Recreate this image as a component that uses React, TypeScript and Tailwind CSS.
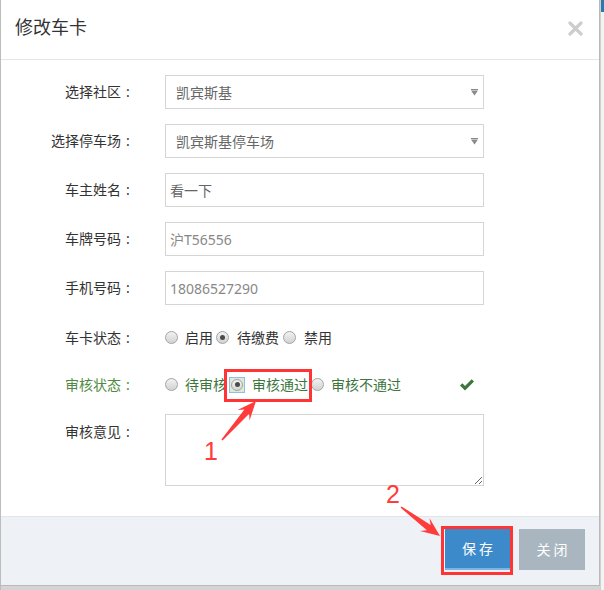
import React from "react";

const CJK = { fontFamily: '"Noto Sans", "Noto Sans CJK SC", sans-serif' };

function arrowPoints(tx: number, ty: number, px: number, py: number) {
  const dx = px - tx;
  const dy = py - ty;
  const len = Math.sqrt(dx * dx + dy * dy);
  const ux = dx / len;
  const uy = dy / len;
  const nx = -uy;
  const ny = ux;
  const headLen = 19;
  const bx = px - ux * headLen;
  const by = py - uy * headLen;
  const nbx = px - ux * (headLen - 5);
  const nby = py - uy * (headLen - 5);
  const pts: [number, number][] = [
    [tx + nx * 0.8, ty + ny * 0.8],
    [nbx + nx * 3.2, nby + ny * 3.2],
    [bx + nx * 8, by + ny * 8],
    [px, py],
    [bx - nx * 8, by - ny * 8],
    [nbx - nx * 3.2, nby - ny * 3.2],
    [tx - nx * 0.8, ty - ny * 0.8],
  ];
  return pts.map((p) => `${p[0].toFixed(1)},${p[1].toFixed(1)}`).join(" ");
}

function Radio({ checked }: { checked?: boolean }) {
  return (
    <span className="w-[13px] h-[13px] rounded-full border border-[#a3a3a3] bg-gradient-to-b from-[#f2f2f2] to-[#d2d2d2] flex items-center justify-center shrink-0">
      {checked && <span className="w-[5px] h-[5px] rounded-full bg-[#4a4a4a]" />}
    </span>
  );
}

function Caret() {
  return (
    <svg width="7" height="7" viewBox="0 0 7 7" className="shrink-0">
      <rect x="0" y="0" width="7" height="1" fill="#8a8a8a" />
      <polygon points="0,1.5 7,1.5 3.5,6.5" fill="#8a8a8a" />
    </svg>
  );
}

function Row({
  label,
  children,
  mb = "mb-[15px]",
  labelClass = "text-[#333]",
  top = false,
}: {
  label: string;
  children: React.ReactNode;
  mb?: string;
  labelClass?: string;
  top?: boolean;
}) {
  return (
    <div className={`flex ${top ? "items-start" : "items-center"} ${mb}`}>
      <div className={`w-[134px] flex justify-end text-[14px] leading-[20px] ${labelClass} ${top ? "pt-[8px]" : ""}`}>
        <span>{label}</span>
        <span className="w-[14px] text-center">:</span>
      </div>
      <div className="ml-[30px]">{children}</div>
    </div>
  );
}

export default function App() {
  return (
    <div className="relative w-[604px] h-[590px] bg-[#d4d4d4] flex overflow-hidden" style={CJK}>
      <div className="w-px h-full bg-[#bdbdbd]" />
      <div className="w-[599px] h-[586px] bg-white border-r border-b border-[#b9b9b9] flex flex-col">
        {/* header */}
        <div className="h-[60px] border-b border-[#e5e5e5] flex items-center justify-between pl-[14px] pr-[16px] shrink-0">
          <div className="text-[18px] text-[#333] leading-none -mt-[6px]">修改车卡</div>
          <svg width="15" height="15" viewBox="0 0 15 15" className="-mt-[2px]">
            <path d="M2 2 L13 13 M13 2 L2 13" stroke="#cdcdcd" strokeWidth="3.2" strokeLinecap="round" />
          </svg>
        </div>
        {/* body */}
        <div className="pt-[15px] pb-[30px] text-[14px]">
          <Row label="选择社区">
            <div className="w-[319px] h-[34px] border border-[#d5d5d5] flex items-center pl-[10px] pr-[5px] text-[#666]">
              <span className="flex-1">凯宾斯基</span>
              <Caret />
            </div>
          </Row>
          <Row label="选择停车场">
            <div className="w-[319px] h-[34px] border border-[#d5d5d5] flex items-center pl-[10px] pr-[5px] text-[#666]">
              <span className="flex-1">凯宾斯基停车场</span>
              <Caret />
            </div>
          </Row>
          <Row label="车主姓名">
            <div className="w-[319px] h-[34px] border border-[#d5d5d5] flex items-center pl-[4px] text-[#666]">看一下</div>
          </Row>
          <Row label="车牌号码">
            <div className="w-[319px] h-[34px] border border-[#d5d5d5] flex items-center pl-[4px] text-[#888]">沪T56556</div>
          </Row>
          <Row label="手机号码">
            <div className="w-[319px] h-[34px] border border-[#d5d5d5] flex items-center pl-[4px] text-[#888]">18086527290</div>
          </Row>
          <Row label="车卡状态" mb="mb-[12px]">
            <div className="w-[319px] h-[35px] flex items-center text-[#333]">
              <Radio />
              <span className="ml-[7px] mr-[3px]">启用</span>
              <Radio checked />
              <span className="ml-[8px] mr-[4px]">待缴费</span>
              <Radio />
              <span className="ml-[8px]">禁用</span>
            </div>
          </Row>
          <Row label="审核状态" mb="mb-[12px]" labelClass="text-[#4f8a43]">
            <div className="w-[319px] h-[35px] flex items-center text-[#3c763d]">
              <Radio />
              <span className="ml-[7px] mr-[2px]">待审核</span>
              <span className="w-[16px] h-[16px] border border-[#96bce6] bg-[#dcebd4] flex items-center justify-center shrink-0">
                <span className="w-[12px] h-[12px] rounded-full border border-[#a3a3a3] bg-gradient-to-b from-[#f4f4f4] to-[#d6d6d6] flex items-center justify-center">
                  <span className="w-[5px] h-[5px] rounded-full bg-[#4a4a4a]" />
                </span>
              </span>
              <span className="ml-[7px] mr-[3px]">审核通过</span>
              <Radio />
              <span className="ml-[7px]">审核不通过</span>
              <span className="ml-auto w-[34px] flex justify-center">
                <svg width="14" height="12" viewBox="0 0 14 12">
                  <polygon points="0,6.5 2.3,4.2 5,6.9 11.7,0.2 14,2.5 5,11.5" fill="#3c763d" />
                </svg>
              </span>
            </div>
          </Row>
          <Row label="审核意见" mb="mb-0" top>
            <textarea readOnly className="block w-[319px] h-[72px] border border-[#d5d5d5] outline-none resize" />
          </Row>
        </div>
        {/* footer */}
        <div className="flex-1 border-t border-[#e1e4e9] bg-[#eef1f5] flex justify-end items-start pt-[12px] pr-[14px] gap-[9px]">
          <button className="w-[65px] h-[41px] bg-[#3d8acb] border-b-2 border-[#7fb4e2] text-white text-[14px] tracking-[3px] pl-[3px]">保存</button>
          <button className="w-[66px] h-[41px] bg-[#a9b6bf] text-white text-[14px] tracking-[3px] pl-[3px]">关闭</button>
        </div>
      </div>
      <div className="flex-1 h-full bg-[#f3f3f3] border-l border-[#cfcfcf] flex flex-col">
        <div className="h-[12px] bg-[#2f78ae]" />
      </div>

      {/* annotations */}
      <div className="absolute left-[224px] top-[369px] w-[88px] h-[33px] border-[3px] border-[#ff3535]" />
      <div className="absolute left-[441px] top-[526px] w-[72px] h-[49px] border-[3px] border-[#ff3535]" />
      <div className="absolute left-[204px] top-[439px] text-[25px] leading-none text-[#ff3b3b]" style={{ fontFamily: '"Liberation Sans", sans-serif' }}>1</div>
      <div className="absolute left-[386px] top-[482px] text-[25px] leading-none text-[#ff3b3b]" style={{ fontFamily: '"Liberation Sans", sans-serif' }}>2</div>
      <svg className="absolute left-0 top-0 pointer-events-none" width="604" height="590">
        <polygon points={arrowPoints(222, 440, 256, 401)} fill="#ff3b3b" />
        <polygon points={arrowPoints(401, 507, 440, 536)} fill="#ff3b3b" />
      </svg>
    </div>
  );
}
